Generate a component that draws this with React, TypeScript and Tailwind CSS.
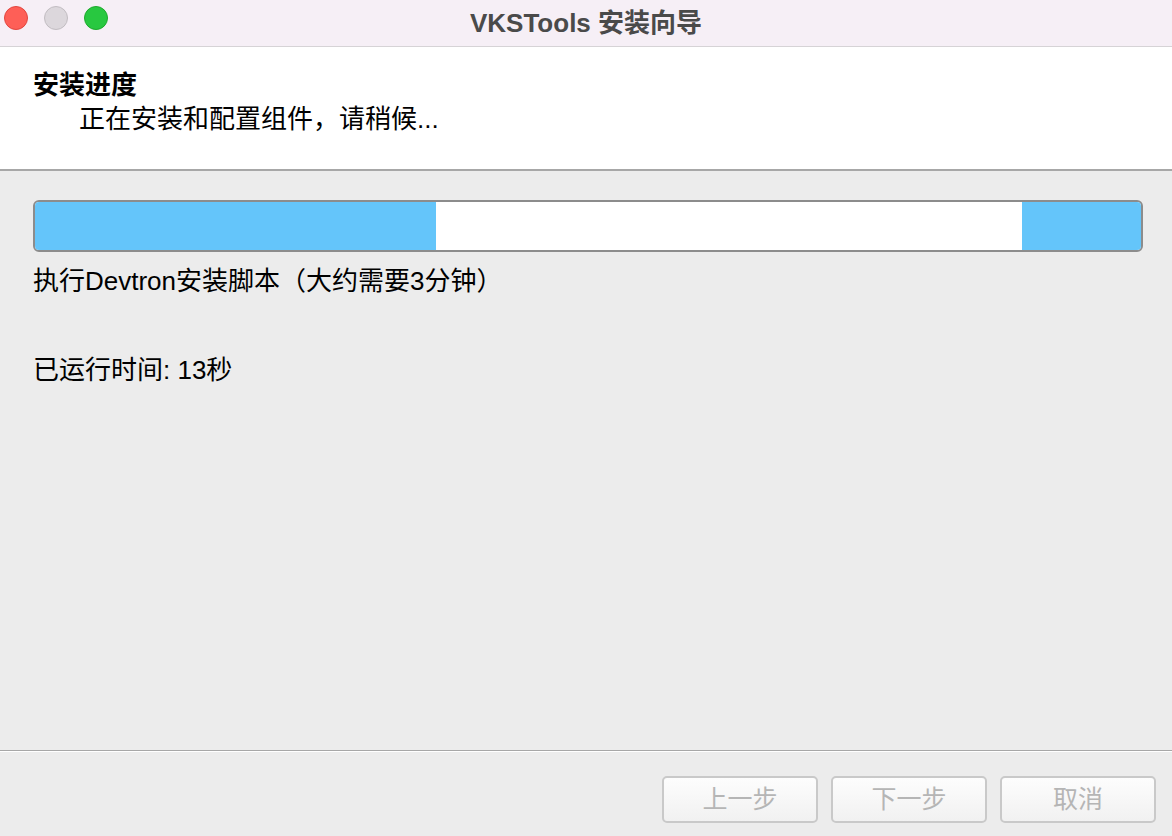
import React from "react";

const font = { fontFamily: '"Liberation Sans", "Noto Sans CJK SC", sans-serif' };

function TrafficLights() {
	return (
		<div className="flex gap-4 pl-1 pt-[6px] self-start">
			<span className="w-6 h-6 rounded-full bg-[#fe5f57] border border-[#e2463f]" />
			<span className="w-6 h-6 rounded-full bg-[#dcd7dc] border border-[#c2bdc2]" />
			<span className="w-6 h-6 rounded-full bg-[#28c840] border border-[#1daa2c]" />
		</div>
	);
}

function WizardButton({ label }: { label: string }) {
	return (
		<button
			disabled
			className="w-[156px] h-[47px] rounded-[5px] border-2 border-[#c9c9c9] bg-gradient-to-b from-[#fdfdfd] to-[#f1f1f1] text-[25px] text-[#b5b5b5] flex items-center justify-center"
		>
			{label}
		</button>
	);
}

export default function App() {
	return (
		<main className="w-[1172px] h-[836px] flex flex-col bg-[#ececec] overflow-hidden" style={font}>
			{/* title bar */}
			<div className="relative h-[47px] flex items-start bg-[#f6eff6] border-b border-[#d6d3d6]">
				<TrafficLights />
				<div className="absolute inset-x-0 top-0 h-[46px] flex items-center justify-center pointer-events-none">
					<span className="text-[26px] font-bold text-[#4a4a4a] leading-none">VKSTools 安装向导</span>
				</div>
			</div>

			{/* header */}
			<div className="h-[122px] bg-white pl-[33px] pt-[21px] text-black text-[26px] leading-[35px]">
				<div className="font-bold">安装进度</div>
				<div className="pl-[46px] -mt-[1px]">正在安装和配置组件，请稍候...</div>
			</div>
			<div className="h-[2px] bg-[#a7a7a7]" />

			{/* body */}
			<div className="flex-1 flex flex-col pl-[33px] pr-[29px] pt-[29px] text-black text-[26px] leading-[35px]">
				<div className="h-[52px] flex rounded-[6px] border-2 border-[#8c8c8c] overflow-hidden bg-white">
					<div className="w-[401px] bg-[#64c5fa]" />
					<div className="flex-1 bg-white" />
					<div className="w-[119px] bg-[#64c5fa]" />
				</div>
				<div className="mt-[12px]">执行Devtron安装脚本（大约需要3分钟）</div>
				<div className="mt-[54px]">已运行时间: 13秒</div>
			</div>

			{/* footer */}
			<div className="h-px bg-[#a7a7a7]" />
			<div className="h-px bg-white" />
			<div className="h-[84px] flex justify-end gap-[13px] pr-4 pt-6">
				<WizardButton label="上一步" />
				<WizardButton label="下一步" />
				<WizardButton label="取消" />
			</div>
		</main>
	);
}
